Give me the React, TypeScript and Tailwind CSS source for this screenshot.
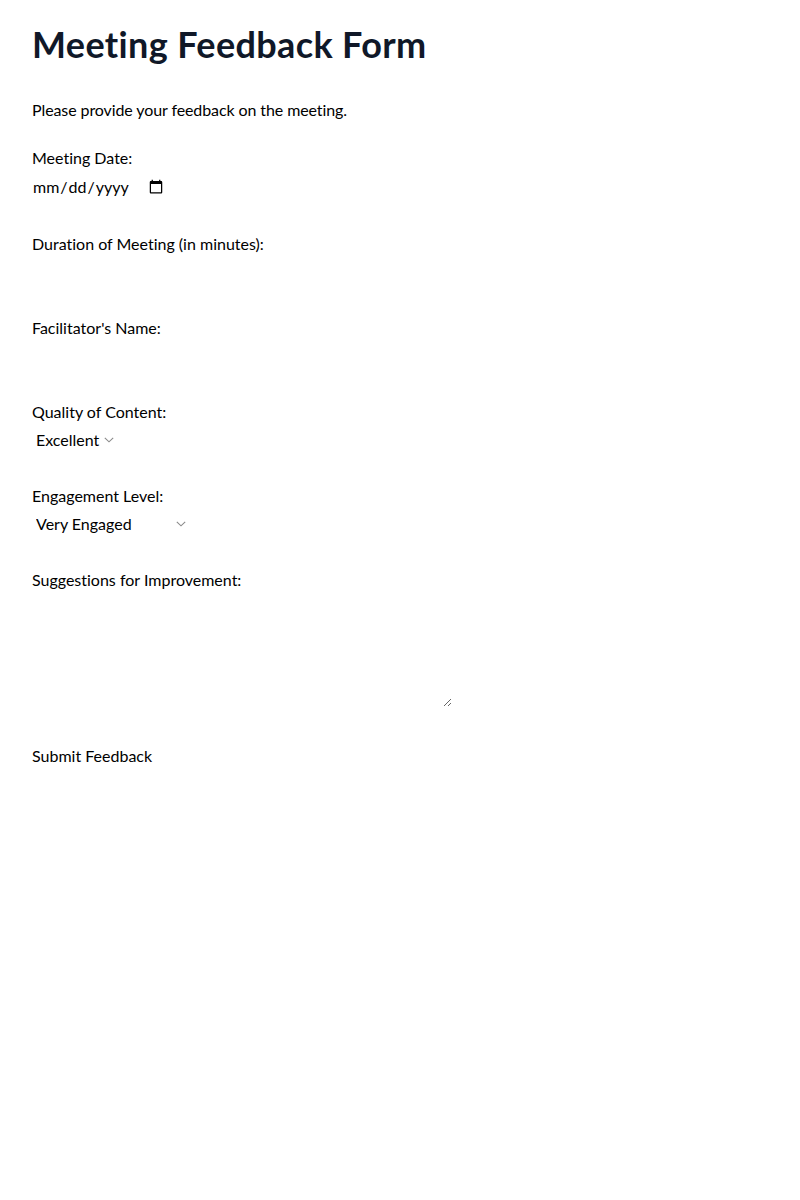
import React from 'react';

const Chevron: React.FC = () => (
    <svg
        className="pointer-events-none absolute right-[6px] top-1/2 -translate-y-1/2"
        width="10"
        height="6"
        viewBox="0 0 10 6"
        fill="none"
    >
        <path d="M0.8 0.8 L5 4.8 L9.2 0.8" stroke="#8a8a8a" strokeWidth="1.1" />
    </svg>
);

const App: React.FC = () => {
    return (
        <div
            className="min-h-screen bg-white px-8 pt-6 text-black [font-variant-ligatures:none]"
            style={{ fontFamily: 'Lato, "Noto Sans", sans-serif' }}
        >
            <h1 className="text-4xl font-bold tracking-[0.01em] text-gray-900 mb-[34px]">Meeting Feedback Form</h1>

            <p className="mb-6 tracking-[-0.006em]">Please provide your feedback on the meeting.</p>

            <form onSubmit={(e) => e.preventDefault()}>
                <div className="mb-8">
                    <label htmlFor="date" className="block">Meeting Date:</label>
                    <input id="date" type="date" className="mt-1 h-[26px] w-[134px]" />
                </div>

                <div className="mb-8">
                    <label htmlFor="duration" className="block">Duration of Meeting (in minutes):</label>
                    <input id="duration" type="number" className="mt-1 h-6" />
                </div>

                <div className="mb-8">
                    <label htmlFor="facilitator" className="block">Facilitator's Name:</label>
                    <input id="facilitator" type="text" className="mt-1 h-6" />
                </div>

                <div className="mb-8">
                    <label htmlFor="quality" className="block">Quality of Content:</label>
                    <span className="relative mt-1 inline-block align-top">
                        <select id="quality" className="block h-6 w-[88px] appearance-none pl-1">
                            <option>Excellent</option>
                            <option>Good</option>
                            <option>Average</option>
                            <option>Poor</option>
                        </select>
                        <Chevron />
                    </span>
                </div>

                <div className="mb-8">
                    <label htmlFor="engagement" className="block">Engagement Level:</label>
                    <span className="relative mt-1 inline-block align-top">
                        <select id="engagement" className="block h-6 w-[160px] appearance-none pl-1">
                            <option>Very Engaged</option>
                            <option>Somewhat Engaged</option>
                            <option>Not Engaged</option>
                        </select>
                        <Chevron />
                    </span>
                </div>

                <div className="mb-8">
                    <label htmlFor="suggestions" className="block">Suggestions for Improvement:</label>
                    <textarea id="suggestions" rows={4} className="mt-1 h-[111px] w-[420px]" />
                </div>

                <button type="submit" className="block -mt-px">Submit Feedback</button>
            </form>
        </div>
    );
};

export default App;
